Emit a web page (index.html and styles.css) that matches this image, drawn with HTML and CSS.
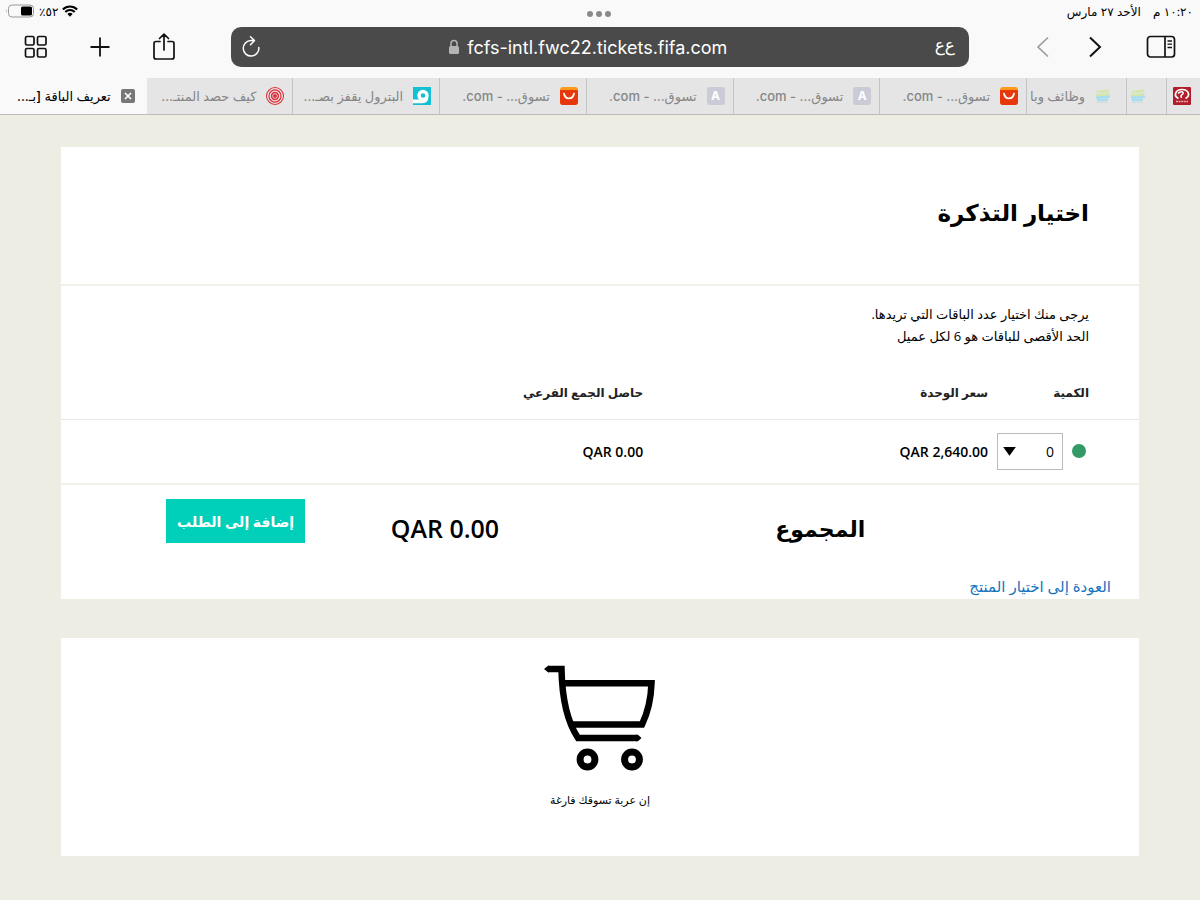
FILE: index.html
```html
<!DOCTYPE html>
<html lang="ar">
<head>
<meta charset="utf-8">
<title>تعريف الباقة</title>
<meta name="viewport" content="width=device-width, initial-scale=1">
<link rel="stylesheet" href="styles.css">
</head>
<body>
<header class="browser">
  <div class="status">
    <div class="status-side">
      <svg class="battery" width="30" height="14" viewBox="0 0 30 14" aria-hidden="true"><path d="M1.5 5q-1.5 2 0 4z" fill="#999"/><rect x="3.5" y="1" width="25" height="12" rx="3.5" fill="none" stroke="#999"/><rect x="16" y="2.500" width="11" height="9" rx="1.500" fill="#000"/></svg>
      <span dir="rtl">٥٢٪</span>
      <svg width="16" height="12" viewBox="0 0 16 12" aria-hidden="true"><g fill="none" stroke="#000" stroke-width="2.100"><path d="M.9 4.400a10.200 10.200 0 0 1 14.200 0"/><path d="M3.300 7a6.700 6.700 0 0 1 9.400 0"/></g><path d="M8 11.800 5.400 9.100a3.700 3.700 0 0 1 5.200 0z"/></svg>
    </div>
    <button class="dots" aria-label="خيارات النوافذ"><i></i><i></i><i></i></button>
    <div class="status-side status-end" dir="rtl"><span>١٠:٢٠ م</span><span>الأحد ٢٧ مارس</span></div>
  </div>
  <div class="toolbar">
    <div class="tools">
      <button class="tool" aria-label="كل الألسنة"><svg width="24" height="24" viewBox="0 0 24 24" fill="none" stroke="#111" stroke-width="1.700"><rect x="1.500" y="1.500" width="8.500" height="8.500" rx="1.500"/><rect x="13.500" y="1.500" width="8.500" height="8.500" rx="1.500"/><rect x="1.500" y="13.500" width="8.500" height="8.500" rx="1.500"/><rect x="13.500" y="13.500" width="8.500" height="8.500" rx="1.500"/></svg></button>
      <button class="tool" aria-label="لسان جديد"><svg width="24" height="24" viewBox="0 0 24 24" fill="none" stroke="#111" stroke-width="1.800"><path d="M12 2.500v19M2.500 12h19"/></svg></button>
      <button class="tool" aria-label="مشاركة"><svg width="24" height="28" viewBox="0 0 24 28" fill="none" stroke="#111" stroke-width="1.700" stroke-linejoin="round" stroke-linecap="round"><path d="M8 8.500H4a2 2 0 0 0-2 2V24a2 2 0 0 0 2 2h16a2 2 0 0 0 2-2V10.500a2 2 0 0 0-2-2h-4M12 17V1.500M7.500 5.500 12 1.200l4.500 4.300"/></svg></button>
    </div>
    <div class="address">
      <button class="tool reload" aria-label="تحديث"><svg width="20" height="22" viewBox="0 0 20 22" fill="none" stroke="#fff" stroke-width="1.500" stroke-linecap="round" stroke-linejoin="round"><path d="M17.800 11.500A7.800 7.800 0 1 1 10 4.500h3M9.500.8l4 3.700-4 4.200"/></svg></button>
      <div class="url"><svg width="12" height="16" viewBox="0 0 12 16" aria-hidden="true"><rect x="1" y="7" width="10" height="8" rx="1.500" fill="#b4b4b6"/><path d="M3 7.500V4.500a3 3 0 0 1 6 0v3" fill="none" stroke="#b4b4b6" stroke-width="1.500"/></svg><span>fcfs-intl.fwc22.tickets.fifa.com</span></div>
      <button class="tool aa" lang="ar"><span>ع</span><span>ع</span></button>
    </div>
    <div class="tools tools-end">
      <button class="tool" aria-label="السابق"><svg width="14" height="22" viewBox="0 0 14 22" fill="none" stroke="#999" stroke-width="1.600"><path d="M12 1.500 2 11l10 9.500"/></svg></button>
      <button class="tool" aria-label="التالي"><svg width="14" height="22" viewBox="0 0 14 22" fill="none" stroke="#111" stroke-width="2"><path d="m2 1.500 10 9.500L2 20.500"/></svg></button>
      <button class="tool" aria-label="الشريط الجانبي"><svg width="30" height="24" viewBox="0 0 30 24" fill="none" stroke="#111" stroke-width="1.700"><rect x="1.500" y="1.500" width="27" height="20.500" rx="3"/><path d="M19 1.500V22"/><path d="M21.500 6h4.500M21.500 9.200h4.500M21.500 12.500h4.500" stroke-width="1.300"/></svg></button>
    </div>
  </div>
  <nav class="tabs">
    <div class="tab tab-active" dir="rtl"><button class="close" aria-label="إغلاق"><svg width="14" height="14" viewBox="0 0 14 14"><rect width="14" height="14" rx="2" fill="#77777a"/><path d="m4 4 6 6m0-6-6 6" stroke="#fff" stroke-width="1.700"/></svg></button><span>تعريف الباقة [بـ...</span></div>
    <div class="tab" dir="rtl"><svg width="18" height="18" viewBox="0 0 18 18"><circle cx="9" cy="9" r="9" fill="#d6303c"/><g fill="none" stroke="#f3e4e4" stroke-width="1.300"><circle cx="9" cy="9" r="7.300"/><circle cx="9" cy="9" r="4.800"/><circle cx="9" cy="9" r="2.400" stroke-width=".8"/></g></svg><span>كيف حصد المنتـ...</span></div>
    <div class="tab" dir="rtl"><svg width="18" height="18" viewBox="0 0 18 18"><path fill="#13bfd3" d="M0 0h18v18H0z"/><circle cx="10" cy="8.500" r="4" fill="none" stroke="#fff" stroke-width="3.400"/><path d="M0 12.500h10l5-2 .3 1.500c-1 3-3 4.200-6.300 4.200H0z" fill="#fff"/></svg><span>البترول يقفز بصـ...</span></div>
    <div class="tab" dir="rtl"><svg width="18" height="18" viewBox="0 0 18 18"><rect width="18" height="18" rx="3" fill="#ff9918"/><path d="M0 3h18v12q0 3-3 3H3q-3 0-3-3z" fill="#e7370c"/><path d="M4 6.500c1 6.500 9 6.500 10 0" fill="none" stroke="#fff" stroke-width="1.700" stroke-linecap="round"/></svg><span>تسوق... - com.</span></div>
    <div class="tab" dir="rtl"><b class="letter">A</b><span>تسوق... - com.</span></div>
    <div class="tab" dir="rtl"><b class="letter">A</b><span>تسوق... - com.</span></div>
    <div class="tab" dir="rtl"><svg width="18" height="18" viewBox="0 0 18 18"><rect width="18" height="18" rx="3" fill="#ff9918"/><path d="M0 3h18v12q0 3-3 3H3q-3 0-3-3z" fill="#e7370c"/><path d="M4 6.500c1 6.500 9 6.500 10 0" fill="none" stroke="#fff" stroke-width="1.700" stroke-linecap="round"/></svg><span>تسوق... - com.</span></div>
    <div class="tab tab-jobs" dir="rtl"><svg width="16" height="16" viewBox="0 0 16 16" fill="none" stroke-width="2.400"><path d="M2 3.500q6 .5 12-1M1 7q7 .5 13-1" stroke="#d3e6ac"/><path d="M1 9.500q7 0 14-1M2 12q6 .5 11-.5" stroke="#a8dcef"/><path d="M2 14.500h11" stroke="#cfdcdc" stroke-width="1"/></svg><span>وظائف وبا</span></div>
    <div class="tab tab-small" dir="rtl"><svg width="16" height="16" viewBox="0 0 16 16" fill="none" stroke-width="2.400"><path d="M2 3.500q6 .5 12-1M1 7q7 .5 13-1" stroke="#d3e6ac"/><path d="M1 9.500q7 0 14-1M2 12q6 .5 11-.5" stroke="#a8dcef"/><path d="M2 14.500h11" stroke="#cfdcdc" stroke-width="1"/></svg></div>
    <div class="tab tab-last" dir="rtl"><svg width="18" height="18" viewBox="0 0 18 18"><rect width="18" height="18" rx="1" fill="#b01e2c"/><path d="M5.500 11.500C0 9 2.500 2.500 9 2.500s9 6 3.500 9" fill="none" stroke="#fff" stroke-width="1.700"/><path d="M5 6.500c3-3 6-1.500 5 .2-1.200 1.600-3 .8-1.500 4.300" fill="none" stroke="#fff" stroke-width="1.500"/><path d="M3 14.500h12" stroke="#e6a9ae" stroke-width="1.500" stroke-dasharray="2 .6"/></svg></div>
  </nav>
</header>

<main class="page" dir="rtl">
  <section class="card">
    <h1 class="title">اختيار التذكرة</h1>
    <p class="intro">يرجى منك اختيار عدد الباقات التي تريدها.<br>الحد الأقصى للباقات هو 6 لكل عميل</p>
    <table class="tickets">
      <thead>
        <tr><th class="col-qty" scope="col" id="qty-label">الكمية</th><th class="col-price" scope="col">سعر الوحدة</th><th scope="col">حاصل الجمع الفرعي</th></tr>
      </thead>
      <tbody>
        <tr>
          <td><div class="qty"><i class="available"></i><div class="picker"><select aria-labelledby="qty-label"><option>0</option><option>1</option><option>2</option><option>3</option><option>4</option><option>5</option><option>6</option></select></div></div></td>
          <td><bdi dir="ltr">QAR 2,640.00</bdi></td>
          <td><bdi dir="ltr">QAR 0.00</bdi></td>
        </tr>
      </tbody>
    </table>
    <div class="total">
      <strong class="total-label">المجموع</strong>
      <bdi class="total-sum" dir="ltr">QAR 0.00</bdi>
      <button class="add">إضافة إلى الطلب</button>
    </div>
    <a class="back" href="#">العودة إلى اختيار المنتج</a>
  </section>

  <section class="card cart">
    <svg width="112" height="106" viewBox="0 0 112 106" fill="none" stroke="#000" stroke-width="6.500" aria-hidden="true"><path d="M4 4h13.500C18 31 22 55 34 73H93"/><path d="M20 18.200h87.500c-.5 16-3 28-9.500 41.300H28"/><path d="M0 4 4 .75h1v6.500H4zM97.500 73 94 69.750h-2v6.500h2z" fill="#000" stroke="none"/><circle cx="43.500" cy="94.500" r="7.400" stroke-width="7"/><circle cx="88" cy="94.500" r="7.400" stroke-width="7"/></svg>
    <p class="empty">إن عربة تسوقك فارغة</p>
  </section>
</main>
</body>
</html>
```
FILE: styles.css
```css
* { box-sizing: border-box; }

body {
  margin: 0;
  min-height: 100vh;
  background: #edede3;
  color: #000;
  font-family: "Open Sans", "DejaVu Sans", sans-serif;
}

button, select { font: inherit; }

/* Browser chrome */
.browser {
  background: #f9f9fa;
  font-family: Inter, "DejaVu Sans", sans-serif;
}

.status {
  display: grid;
  grid-template-columns: 1fr auto 1fr;
  align-items: center;
  height: 24px;
  padding: 0 7px 2px 5px;
  font-size: 12px;
}

.status-side { display: flex; align-items: center; gap: 4px; }
.status-end { gap: 12px; }

.dots {
  display: flex;
  gap: 3px;
  padding: 6px 0 0;
  border: 0;
  background: none;
}

.dots i { width: 6px; height: 6px; border-radius: 50%; background: #8a8a8c; }

.toolbar {
  display: grid;
  grid-template-columns: 231px 1fr 231px;
  align-items: center;
  height: 54px;
  padding-bottom: 8px;
}

.tools { display: flex; align-items: center; gap: 40px; padding-left: 24px; }
.tools-end { justify-content: flex-end; gap: 38px; padding: 0 24px 0 0; }
.tools-end .tool:last-child { margin-left: 6px; }

.tool { display: flex; padding: 0; border: 0; background: none; color: inherit; }

.address {
  display: flex;
  align-items: center;
  justify-content: space-between;
  height: 40px;
  padding: 0 14px 0 10px;
  border-radius: 10px;
  background: #4a4a4a;
  color: #fff;
}

.url { display: flex; align-items: center; gap: 7px; padding-right: 20px; font-size: 18px; }
.aa { padding-bottom: 5px; font-size: 17px; }

.tabs {
  display: flex;
  height: 37px;
  border-bottom: 1px solid #bcbcbc;
  background: #e5e5e5;
  color: #858587;
  font-size: 13px;
  font-weight: 500;
}

.tab {
  display: flex;
  flex: 1 1 100px;
  align-items: center;
  gap: 10px;
  min-width: 0;
  padding-right: 8px;
  overflow: hidden;
  border-right: 1px solid #c4c4c4;
  white-space: nowrap;
}

.tab svg, .letter { flex: none; }
.tab-active { padding-right: 12px; border-right: 0; background: #f9f9fa; color: #000; }
.tab-jobs { flex: 0 0 100px; padding-right: 15px; }
.tab-small { flex: 0 0 40px; padding-right: 20px; }
.tab-last { flex: 0 0 33px; padding-right: 9px; border-right: 0; }
.close { display: flex; padding: 0; border: 0; background: none; }

.letter {
  width: 18px;
  border-radius: 3px;
  background: #cbcbd8;
  color: #fff;
  font-size: 12px;
  line-height: 18px;
  text-align: center;
}

/* Ticket page */
.page {
  display: grid;
  gap: 39px;
  padding: 32px 61px 44px;
}

.card { background: #fff; }

.title {
  margin: 0;
  padding: 46px 50px 52px;
  border-bottom: 2px solid #f1f1ea;
  font-size: 23px;
  line-height: 39px;
}

.intro {
  margin: 0;
  padding: 17px 50px 21px;
  font-size: 13px;
  line-height: 22px;
}

.tickets {
  width: 100%;
  border-collapse: collapse;
  table-layout: fixed;
  font-size: 14px;
  font-weight: 600;
}

.tickets th, .tickets td { padding: 0; border-bottom: 1px solid #e9e9e6; text-align: right; }
.tickets th { height: 51px; padding-bottom: 2px; color: #222; font-size: 12px; }
.tickets td { height: 65px; border-bottom: 2px solid #f1f1ea; }
.tickets .col-qty { width: 14%; padding-right: 50px; }
.col-price { width: 32%; }

.qty { display: flex; align-items: center; gap: 9px; padding-right: 53px; }
.available { width: 14px; height: 14px; border-radius: 50%; background: #339966; }
.picker { position: relative; }

.picker select {
  display: block;
  width: 66px;
  height: 37px;
  padding: 0 8px;
  border: 1px solid #bbb;
  border-radius: 0;
  background: #fff;
  color: #000;
  font-weight: 400;
  appearance: none;
}

.picker::after {
  content: "";
  position: absolute;
  top: 14px;
  left: 6px;
  width: 13px;
  height: 9px;
  background: #000;
  clip-path: polygon(0 0, 100% 0, 50% 100%);
  pointer-events: none;
}

.total {
  display: grid;
  grid-template-columns: 366fr 194fr 244fr;
  padding: 14px 25.4% 0 0;
}

.total-label, .total-sum { padding-top: 10px; line-height: 39px; }
.total-label { font-size: 22px; }
.total-sum { font-size: 25px; font-weight: 600; text-align: right; }

.add {
  justify-self: start;
  height: 44px;
  padding: 0 11px;
  border: 0;
  background: #00d0b9;
  color: #fff;
  font-size: 14px;
  font-weight: 700;
  white-space: nowrap;
}

.back {
  display: block;
  width: fit-content;
  margin-right: 28px;
  padding-top: 26px;
  color: #1473bd;
  font-size: 15px;
  line-height: 25px;
  text-decoration: none;
}

.cart {
  display: flex;
  flex-direction: column;
  align-items: center;
  padding: 27px 20px 45px;
}

.empty { margin: 18px 0 0; font-size: 11px; line-height: 22px; }
```
